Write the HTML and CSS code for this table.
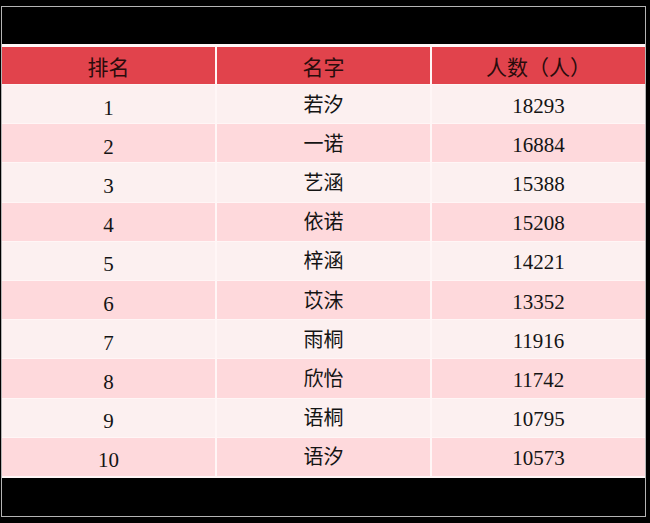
FILE: index.html
```html
<!DOCTYPE html>
<html lang="zh-CN">
<head>
<meta charset="utf-8">
<title>排名</title>
<link rel="stylesheet" href="styles.css">
</head>
<body>
<div class="frame">
  <div class="band"></div>
  <div class="table">
    <div class="cell head">排名</div>
    <div class="cell head">名字</div>
    <div class="cell head">人数（人）</div>

    <div class="cell odd rank">1</div><div class="cell odd name">若汐</div><div class="cell odd count">18293</div>
    <div class="cell even rank">2</div><div class="cell even name">一诺</div><div class="cell even count">16884</div>
    <div class="cell odd rank">3</div><div class="cell odd name">艺涵</div><div class="cell odd count">15388</div>
    <div class="cell even rank">4</div><div class="cell even name">依诺</div><div class="cell even count">15208</div>
    <div class="cell odd rank">5</div><div class="cell odd name">梓涵</div><div class="cell odd count">14221</div>
    <div class="cell even rank">6</div><div class="cell even name">苡沫</div><div class="cell even count">13352</div>
    <div class="cell odd rank">7</div><div class="cell odd name">雨桐</div><div class="cell odd count">11916</div>
    <div class="cell even rank">8</div><div class="cell even name">欣怡</div><div class="cell even count">11742</div>
    <div class="cell odd rank">9</div><div class="cell odd name">语桐</div><div class="cell odd count">10795</div>
    <div class="cell even rank">10</div><div class="cell even name">语汐</div><div class="cell even count">10573</div>
  </div>
  <div class="band bottom"></div>
</div>
</body>
</html>
```
FILE: styles.css
```css
html, body {
  margin: 0;
  padding: 0;
  background: #000;
}
body {
  padding: 6px 0 0 1px;
  font-family: "Liberation Serif", "Noto Sans CJK SC", serif;
  color: #141414;
}
.frame {
  box-sizing: border-box;
  width: 645px;
  height: 511px;
  border: 1px solid #b4b4b4;
  background: #000;
  display: flex;
  flex-direction: column;
}
.band {
  height: 37px;
  flex: none;
}
.band.bottom {
  flex: 1;
}
.table {
  flex: none;
  height: 434px;
  box-sizing: border-box;
  padding: 3px 0 2px 0;
  background: #fff6f6;
  display: grid;
  grid-template-columns: 213px 213px 1fr;
  grid-template-rows: 37px repeat(10, 1fr);
  column-gap: 2px;
  row-gap: 1px;
}
.cell {
  display: flex;
  align-items: center;
  justify-content: center;
  font-size: 21px;
  box-sizing: border-box;
}
.head {
  background: #e1434c;
  color: #2a0c0c;
  font-family: "Noto Sans CJK SC", sans-serif;
  font-size: 21px;
  padding-top: 1px;
}
.rank {
  padding-top: 8px;
}
.name {
  font-family: "Noto Sans CJK SC", sans-serif;
  font-size: 20px;
  padding-bottom: 2px;
}
.count {
  padding-top: 4px;
}
.odd {
  background: #fcf0f0;
}
.even {
  background: #fed9dc;
}
```
